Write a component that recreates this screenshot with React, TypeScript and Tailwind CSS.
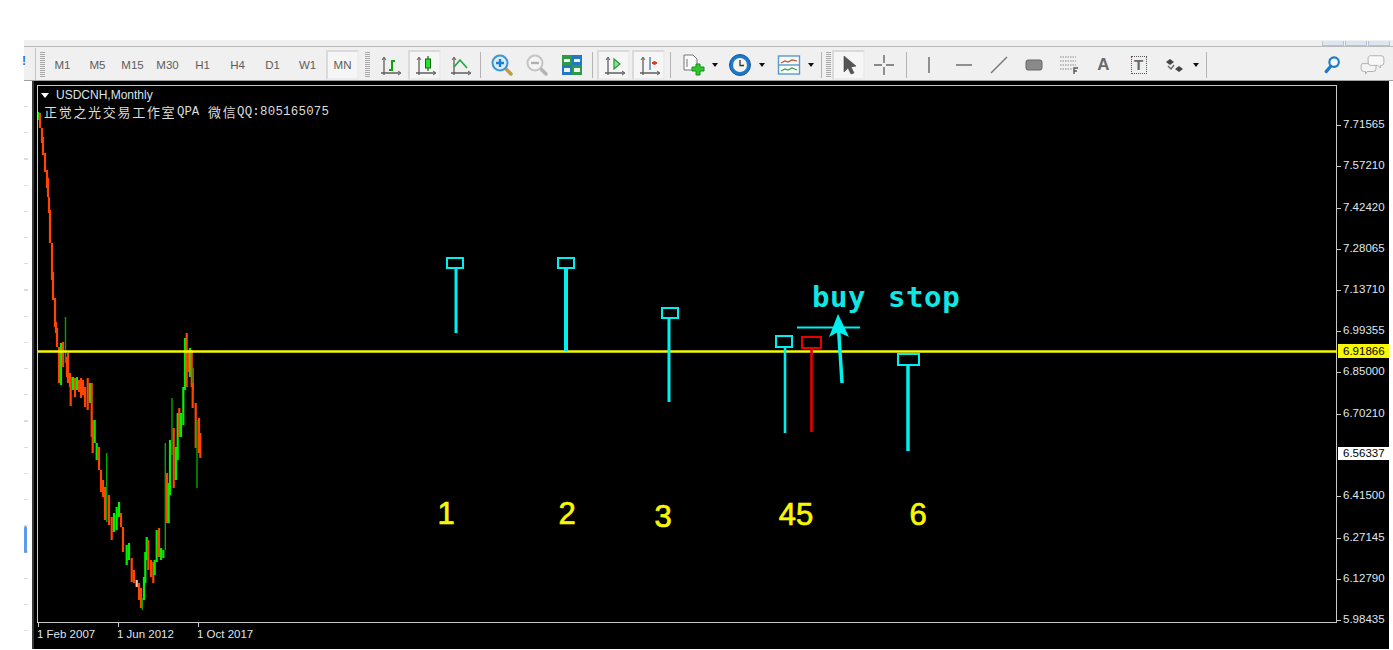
import type { ReactNode } from 'react';

// Chart data is in page pixels; the plot svg's viewBox starts at the frame corner.
type Bar = [number, number, number, 'o' | 'g' | 'd' | 'p'];

const bars: Bar[] = [
  [38, 112, 120, 'g'], [40, 113, 128, 'o'], [42, 128, 143, 'o'], [43, 137, 155, 'o'], [45, 153, 172, 'o'],
  [47, 170, 188, 'o'], [48, 178, 197, 'o'], [49, 197, 213, 'o'], [50, 210, 243, 'o'], [52, 243, 280, 'o'],
  [53, 272, 300, 'o'], [55, 298, 327, 'o'], [56, 322, 333, 'o'], [57, 328, 347, 'o'], [59, 347, 383, 'o'],
  [60, 365, 383, 'o'], [61, 343, 385, 'g'], [63, 342, 367, 'o'], [65.5, 317, 363, 'd'], [67, 357, 377, 'o'],
  [68, 353, 383, 'o'], [70, 373, 387, 'o'], [70.7, 377, 406, 'o'], [73, 377, 390, 'g'], [75, 378, 397, 'o'],
  [77, 377, 390, 'g'], [79, 380, 392, 'o'], [81, 378, 398, 'o'], [83, 380, 395, 'o'], [85, 387, 407, 'o'],
  [87.7, 378, 410, 'o'], [90, 383, 403, 'g'], [91.7, 383, 437, 'o'], [92.7, 420, 453, 'o'], [94.7, 420, 443, 'g'],
  [96.7, 443, 460, 'g'], [99, 447, 470, 'o'], [101, 470, 492, 'o'], [103, 480, 497, 'o'], [105, 487, 520, 'o'],
  [106.7, 453, 522, 'd'], [109, 495, 525, 'o'], [111.7, 517, 540, 'o'], [114, 513, 532, 'g'], [116.7, 507, 530, 'g'],
  [119, 502, 517, 'g'], [121, 513, 527, 'o'], [123, 527, 552, 'o'], [126.7, 545, 565, 'g'], [129, 543, 560, 'g'],
  [131.7, 558, 582, 'o'], [134, 570, 583, 'o'], [136.7, 580, 587, 'p'], [139, 583, 600, 'o'], [141, 588, 608, 'o'],
  [142.3, 598, 610, 'd'], [144, 577, 600, 'g'], [145.3, 552, 583, 'g'], [146.7, 537, 560, 'g'], [148.3, 540, 570, 'o'],
  [151, 560, 577, 'o'], [153.3, 562, 583, 'o'], [154.7, 560, 575, 'g'], [156.7, 530, 562, 'g'], [159, 528, 557, 'o'],
  [161, 548, 560, 'g'], [163.3, 550, 558, 'g'], [165.3, 443, 550, 'd'], [167, 473, 523, 'o'], [168.7, 483, 523, 'g'],
  [170, 440, 495, 'g'], [172, 398, 455, 'd'], [173.7, 428, 488, 'o'], [176, 447, 480, 'g'], [177.7, 413, 460, 'g'],
  [179.3, 408, 437, 'o'], [181, 413, 437, 'g'], [183.3, 387, 425, 'g'], [185, 338, 390, 'g'], [186.7, 333, 387, 'o'],
  [188.5, 350, 372, 'o'], [190, 348, 377, 'g'], [191.7, 350, 387, 'o'], [193.3, 368, 390, 'd'], [192.7, 383, 408, 'o'],
  [195.7, 403, 448, 'o'], [197, 420, 488, 'd'], [199, 418, 453, 'o'], [200.3, 433, 458, 'o'],
];

const barColor = { o: '#ff4500', g: '#00f000', d: '#00a800', p: '#ffc8b0' };

const prices: [string, number][] = [
  ['7.71565', 125], ['7.57210', 166], ['7.42420', 208], ['7.28065', 249], ['7.13710', 290], ['6.99355', 331],
  ['6.85000', 372], ['6.70210', 414], ['6.41500', 496], ['6.27145', 538], ['6.12790', 579], ['5.98435', 620],
];

const markers = [
  { x: 447, w: 16, y: 258, h: 10, stem: 456, end: 333, sw: 3, color: '#00f0f0' },
  { x: 558, w: 16, y: 258, h: 10, stem: 566, end: 351, sw: 4, color: '#00f0f0' },
  { x: 662, w: 16, y: 308, h: 10, stem: 669, end: 402, sw: 3, color: '#00f0f0' },
  { x: 776, w: 16, y: 336, h: 11, stem: 785, end: 433, sw: 2.6, color: '#00f0f0' },
  { x: 802, w: 19, y: 337, h: 11, stem: 811.5, end: 432, sw: 2.6, color: '#e80000' },
  { x: 898, w: 21, y: 354, h: 11, stem: 908, end: 451, sw: 3.5, color: '#00f0f0' },
];

const digits: [string, number, number][] = [['1', 446, 524], ['2', 567, 524], ['3', 663, 527], ['45', 796, 525], ['6', 918, 525]];

function Btn({ w = 35, active, children }: { w?: number; active?: boolean; children?: ReactNode }) {
  return (
    <div style={{ width: w }} className="h-[33px] shrink-0 flex items-center justify-center">
      {active ? (
        <div className="w-[33px] h-[30px] flex items-center justify-center bg-[#f6f6f6] border-2 border-[#dadada] border-b-[#ececec] border-r-[#ececec]">
          {children}
        </div>
      ) : children}
    </div>
  );
}

function Period({ label, active }: { label: string; active?: boolean }) {
  return (
    <Btn active={active}>
      <span className="text-[11.5px] text-[#5c5c5c] pt-[2px]">{label}</span>
    </Btn>
  );
}

const Sep = ({ w = 8 }: { w?: number }) => (
  <div style={{ width: w }} className="h-[33px] shrink-0 flex items-center justify-center">
    <div className="w-px h-[26px] bg-[#b4b4b4]" />
  </div>
);

const Gripper = () => (
  <div className="w-[5px] h-[25px] shrink-0 bg-[repeating-linear-gradient(to_bottom,#a8a8a8_0,#a8a8a8_1px,#f0f0f0_1px,#f0f0f0_2px)]" />
);

const Caret = () => (
  <div className="w-[10px] shrink-0 flex items-center justify-center">
    <div className="w-0 h-0 border-x-[3.5px] border-x-transparent border-t-[4px] border-t-[#111]" />
  </div>
);

const Icon = ({ children, size = 24 }: { children: ReactNode; size?: number }) => (
  <svg width={size} height={size} viewBox="0 0 24 24" fill="none">{children}</svg>
);

const Axes = () => (
  <g stroke="#5f5f5f" strokeWidth="1.3">
    <path d="M6 5v17M3 20h19" />
    <path d="M4 7l2-3 2 3M20 18l3 2-3 2" strokeWidth="1" />
  </g>
);

export default function App() {
  return (
    <div className="w-[1393px] h-[650px] bg-white flex flex-col overflow-hidden font-['Liberation_Sans',sans-serif]">
      {/* Window strip */}
      <div className="h-[40px] shrink-0" />
      <div className="h-[7px] shrink-0 ml-[24px] bg-[#f0f0f0] border-b border-[#b9b9b9] flex justify-end items-end pr-[3px] gap-px">
        <div className="w-[22px] h-[5px] bg-[#dbe6f2] border border-t-0 border-[#b5c5d8]" />
        <div className="w-[22px] h-[5px] bg-[#dbe6f2] border border-t-0 border-[#b5c5d8]" />
        <div className="w-[22px] h-[5px] bg-[#dbe6f2] border border-t-0 border-[#b5c5d8]" />
      </div>

      {/* Toolbar */}
      <div className="h-[34px] shrink-0 flex">
        <div className="w-[24px] shrink-0 relative">
          <span className="absolute right-[-2px] top-[5px] text-[12px] font-bold text-[#2a6fd8]">!</span>
        </div>
        <div className="flex-1 flex items-center bg-[#f0f0f0] border-b border-[#a0a0a0] pt-[2px] overflow-hidden">
          <div className="w-[12px] h-[33px] shrink-0 border-r border-[#c4c4c4]" />
          <div className="w-[4px] shrink-0" />
          <Gripper />
          <Period label="M1" />
          <Period label="M5" />
          <Period label="M15" />
          <Period label="M30" />
          <Period label="H1" />
          <Period label="H4" />
          <Period label="D1" />
          <Period label="W1" />
          <Period label="MN" active />
          <div className="w-[5px] shrink-0" />
          <Gripper />
          <div className="w-[2px] shrink-0" />

          <Btn>
            <Icon>
              <Axes />
              <path d="M11 17h3V8h3" stroke="#12a012" strokeWidth="2" />
            </Icon>
          </Btn>
          <Btn active>
            <Icon>
              <Axes />
              <path d="M15 3v15" stroke="#1a5a1a" strokeWidth="1.2" />
              <rect x="12.5" y="6" width="5" height="9" fill="#27e027" stroke="#0c6a0c" />
            </Icon>
          </Btn>
          <Btn>
            <Icon>
              <Axes />
              <path d="M6 14l6-7 7 8" stroke="#26a84a" strokeWidth="1.8" />
            </Icon>
          </Btn>
          <Sep w={7} />
          <Btn>
            <Icon>
              <path d="M15 15l6 6" stroke="#c89a40" strokeWidth="3.5" strokeLinecap="round" />
              <circle cx="10" cy="10" r="7.5" fill="#d9eefb" stroke="#3a96d8" strokeWidth="2" />
              <path d="M6 10h8M10 6v8" stroke="#1f7fc8" strokeWidth="2.4" />
            </Icon>
          </Btn>
          <Btn>
            <Icon>
              <path d="M15 15l6 6" stroke="#b4b4b4" strokeWidth="3.5" strokeLinecap="round" />
              <circle cx="10" cy="10" r="7.5" fill="#f4f4f4" stroke="#c4c4c4" strokeWidth="2" />
              <path d="M6 10h8" stroke="#b0b0b0" strokeWidth="2.4" />
            </Icon>
          </Btn>
          <Btn>
            <Icon>
              <rect x="2" y="2" width="10" height="10" fill="#2f9a46" />
              <rect x="12" y="2" width="10" height="10" fill="#2278c4" />
              <rect x="2" y="12" width="10" height="10" fill="#2278c4" />
              <rect x="12" y="12" width="10" height="10" fill="#2f9a46" />
              <path d="M4 6h6v3H4zM14 6h6v3h-6zM4 15h6v4H4zM14 15h6v4h-6z" fill="#eef6ee" />
            </Icon>
          </Btn>
          <Sep w={7} />
          <Btn active>
            <Icon>
              <Axes />
              <path d="M12 6l6 5-6 5z" fill="#8fe08f" stroke="#1f9a3a" strokeWidth="1.2" />
            </Icon>
          </Btn>
          <Btn active>
            <Icon>
              <Axes />
              <path d="M13 4v13" stroke="#4a7fc0" strokeWidth="1.4" />
              <path d="M15 10h5M17.5 8v4" stroke="#d8401a" strokeWidth="2" />
            </Icon>
          </Btn>
          <Sep w={9} />
          <Btn>
            <Icon>
              <path d="M3 2h9l4 4v11H3z" fill="#fafafa" stroke="#777" />
              <path d="M6 6v8" stroke="#777" />
              <path d="M12 14h4v-3h4v3h4v4h-4v4h-4v-4h-4z" transform="translate(-1 0)" fill="#2fc82f" stroke="#169016" />
            </Icon>
          </Btn>
          <Caret />
          <div className="w-[2px] shrink-0" />
          <Btn>
            <Icon>
              <circle cx="12" cy="12" r="10.5" fill="#1f78c8" stroke="#145a9a" />
              <circle cx="12" cy="12" r="7" fill="#f4f4ee" />
              <path d="M12 7v5.5h4" stroke="#333" strokeWidth="1.3" />
            </Icon>
          </Btn>
          <Caret />
          <div className="w-[4px] shrink-0" />
          <Btn>
            <Icon>
              <rect x="1.5" y="3" width="21" height="18" fill="#f6fafc" stroke="#5a9ac8" strokeWidth="1.4" />
              <path d="M2 12h20" stroke="#5a9ac8" strokeWidth="1.4" />
              <path d="M4 10l4-2 3 1 4-2 5 1" stroke="#c8502a" strokeWidth="1.2" />
              <path d="M4 18l4-2 3 1 4-2 5 2" stroke="#3ca03c" strokeWidth="1.2" />
            </Icon>
          </Btn>
          <Caret />
          <Sep w={10} />
          <Gripper />
          <Btn active>
            <Icon>
              <path d="M7 3l0 16 4-4 3 6 3-1-3-6 5-1z" fill="#555" stroke="#444" strokeWidth="0.6" />
            </Icon>
          </Btn>
          <Btn>
            <Icon>
              <path d="M12 2v8M12 14v8M2 12h8M14 12h8" stroke="#666" strokeWidth="1.4" />
            </Icon>
          </Btn>
          <Sep w={10} />
          <Btn>
            <Icon><path d="M12 4v16" stroke="#666" strokeWidth="1.4" /></Icon>
          </Btn>
          <Btn>
            <Icon><path d="M4 12h16" stroke="#666" strokeWidth="1.4" /></Icon>
          </Btn>
          <Btn>
            <Icon><path d="M4 20L20 4" stroke="#777" strokeWidth="1.4" /></Icon>
          </Btn>
          <Btn>
            <Icon><rect x="4" y="7" width="16" height="10" rx="2" fill="#8a8a8a" stroke="#666" /></Icon>
          </Btn>
          <Btn>
            <Icon>
              <path d="M3 4h16M3 8h16M3 12h16M3 16h12" stroke="#888" strokeWidth="1" strokeDasharray="1.5 1" />
              <path d="M17 21v-6h4M17 18h3" stroke="#555" strokeWidth="1.4" />
            </Icon>
          </Btn>
          <Btn>
            <span className="text-[17px] font-bold text-[#6a6a6a] leading-none">A</span>
          </Btn>
          <Btn>
            <div className="w-[16px] h-[18px] border border-dotted border-[#555] flex items-center justify-center">
              <span className="text-[15px] font-bold text-[#6a6a6a] leading-none">T</span>
            </div>
          </Btn>
          <Btn>
            <Icon>
              <path d="M8 6l4 3-4 3-4-3z" fill="#444" />
              <path d="M17 13l4 3-4 3-4-3z" fill="#444" />
              <path d="M6 13l3 3 3-4" stroke="#666" strokeWidth="1.4" />
            </Icon>
          </Btn>
          <Caret />
          <Sep w={10} />
          <div className="flex-1" />
          <Btn>
            <Icon size={19}>
              <circle cx="14" cy="9" r="6" fill="#f4f9ff" stroke="#1f78c8" strokeWidth="2.6" />
              <path d="M10 14l-6 7" stroke="#1f78c8" strokeWidth="4" strokeLinecap="round" />
            </Icon>
          </Btn>
          <div className="w-[5px] shrink-0" />
          <Btn>
            <svg width="27" height="21" viewBox="0 0 30 24" fill="none">
              <path d="M3 11h13a3 3 0 0 1 3 3v3a3 3 0 0 1-3 3H9l-2 3v-3H5a3 3 0 0 1-3-3v-4z" fill="#f4f4f4" stroke="#a8a8a8" />
              <path d="M14 2h11a3 3 0 0 1 3 3v5a3 3 0 0 1-3 3h-1v3l-3-3h-8a3 3 0 0 1-3-3V5a3 3 0 0 1 4-3z" fill="#f8f8f8" stroke="#a8a8a8" />
            </svg>
          </Btn>
          <div className="w-[3px] shrink-0" />
        </div>
      </div>

      {/* Body */}
      <div className="flex-1 flex min-h-0">
        <div className="w-[24px] shrink-0" />
        <div className="w-[8px] shrink-0 relative">
          <div className="w-[4px] h-full bg-[repeating-linear-gradient(to_bottom,#ffffff_0,#ffffff_25px,#dcdcdc_25px,#dcdcdc_26.2px)]" />
          <div className="absolute left-0 top-[445px] w-[3px] h-[27px] rounded-sm bg-[#5b9bec]" />
        </div>

        <div className="w-[1357px] h-[568px] shrink-0 bg-black flex border-l-2 border-l-[#3a3a3a]">
          <div className="flex-1 flex flex-col pl-[3px] pt-[4px]">
            <div className="h-[538px] shrink-0 relative border border-[#c8c8c8]">
              <svg className="absolute inset-0" width="1299" height="536" viewBox="38 86 1299 536">
                {bars.map(([x, y1, y2, c], i) => (
                  <line key={i} x1={x} x2={x} y1={y1} y2={y2} stroke={barColor[c]} strokeWidth={c === 'd' ? 1.4 : 2.2} />
                ))}
                <line x1="38" x2="1337" y1="351.5" y2="351.5" stroke="#f8f800" strokeWidth="2.6" />
                {markers.map((m, i) => (
                  <g key={i} stroke={m.color}>
                    <rect x={m.x} y={m.y} width={m.w} height={m.h} strokeWidth="2" fill="none" />
                    <line x1={m.stem} x2={m.stem} y1={m.y + m.h} y2={m.end} strokeWidth={m.sw} />
                  </g>
                ))}
                <line x1="797" x2="860" y1="327.5" y2="327.5" stroke="#00f0f0" strokeWidth="2" />
                <path d="M838 314l-9 23 9-5 11 5z" fill="#00f0f0" />
                <line x1="838.5" x2="842" y1="328" y2="383" stroke="#00f0f0" strokeWidth="3.5" />
                <text x="812" y="307" fill="#10e6e6" fontFamily="DejaVu Sans Mono, monospace" fontWeight="700" fontSize="29" letterSpacing="0.6">buy</text>
                <text x="888" y="307" fill="#10e6e6" fontFamily="DejaVu Sans Mono, monospace" fontWeight="700" fontSize="29" letterSpacing="0.6">stop</text>
                {digits.map(([t, x, y]) => (
                  <text key={t} x={x} y={y} textAnchor="middle" fill="#f8f800" stroke="#f8f800" strokeWidth="0.7" fontFamily="Liberation Sans, sans-serif" fontSize="31">{t}</text>
                ))}
              </svg>

              <div className="absolute left-[3px] top-[2px] flex items-center gap-[7px] text-[12px] leading-[14px] text-[#d8e4f0]">
                <div className="w-0 h-0 border-x-[4.5px] border-x-transparent border-t-[5px] border-t-white" />
                <span>USDCNH,Monthly</span>
              </div>
              <div className="absolute left-[6px] top-[18px] whitespace-nowrap text-[#dcdcdc] leading-[16px] flex items-center">
                <span className="w-[133px] text-[13px] tracking-[1.7px] font-['Noto_Sans_CJK_SC',sans-serif]">正觉之光交易工作室</span>
                <span className="w-[31px] text-[12.4px] font-['Liberation_Mono',monospace]">QPA</span>
                <span className="w-[29px] text-[13px] tracking-[1.7px] font-['Noto_Sans_CJK_SC',sans-serif]">微信</span>
                <span className="text-[12.4px] tracking-[0.25px] font-['Liberation_Mono',monospace]">QQ:805165075</span>
              </div>
            </div>

            {/* Time axis */}
            <div className="flex-1 flex text-[11.5px] text-[#dfe6ee]">
              {['1 Feb 2007', '1 Jun 2012', '1 Oct 2017'].map(t => (
                <div key={t} className="w-[80px] pt-[3px] relative">
                  <div className="absolute left-[1px] top-0 w-px h-[4px] bg-[#c8c8c8]" />
                  <span className="block">{t}</span>
                </div>
              ))}
            </div>
          </div>

          {/* Price axis */}
          <div className="w-[52px] shrink-0 relative text-[11.5px] text-[#dfe6ee]">
            {prices.map(([p, y]) => (
              <div key={p} style={{ top: y - 81 - 7 }} className="absolute left-0 h-[14px] flex items-center">
                <div className="w-[4px] h-px bg-[#c8c8c8] mr-[2px]" />
                <span>{p}</span>
              </div>
            ))}
            <div className="absolute left-[1px] right-0 top-[263px] h-[14px] bg-[#f8f800] text-black pl-[5px] leading-[14px]">6.91866</div>
            <div className="absolute left-[1px] right-0 top-[366px] h-[13px] bg-white text-black pl-[5px] leading-[13px]">6.56337</div>
          </div>
        </div>
      </div>
    </div>
  );
}
